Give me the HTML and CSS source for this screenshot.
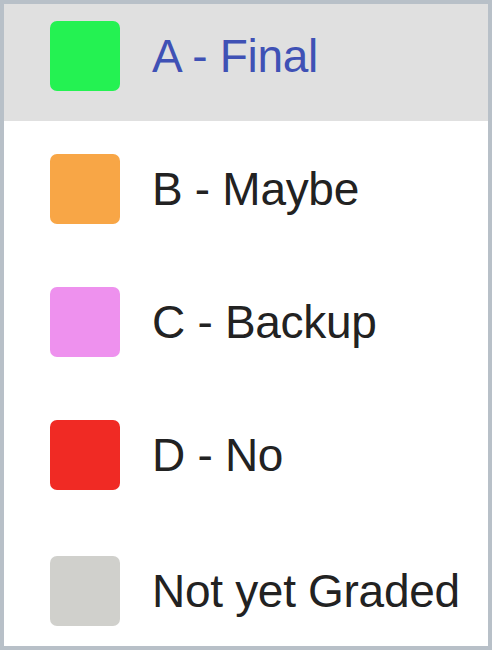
FILE: index.html
```html
<!DOCTYPE html>
<html lang="en">
<head>
  <meta charset="UTF-8">
  <title>Grades</title>
  <link rel="stylesheet" href="styles.css">
</head>
<body>

  <ul class="grade-menu">
    <li class="grade active">
      <span class="swatch green"></span>
      <span class="label">A - Final</span>
    </li>
    <li class="grade">
      <span class="swatch orange"></span>
      <span class="label">B - Maybe</span>
    </li>
    <li class="grade">
      <span class="swatch pink"></span>
      <span class="label">C - Backup</span>
    </li>
    <li class="grade">
      <span class="swatch red"></span>
      <span class="label">D - No</span>
    </li>
    <li class="grade">
      <span class="swatch grey"></span>
      <span class="label">Not yet Graded</span>
    </li>
  </ul>

</body>
</html>
```

FILE: styles.css
```css
html, body {
  margin: 0;
  height: 100%;
}
body {
  font-family: "Liberation Sans", Arial, sans-serif;
  background: #fff;
}
.grade-menu {
  list-style: none;
  margin: 0;
  padding: 0;
  height: 650px;
  box-sizing: border-box;
  border: 4px solid #b8c0c8;
  overflow: hidden;
  display: flex;
  flex-direction: column;
  gap: 16px;
}
.grade {
  flex: 0 0 auto;
  display: flex;
  align-items: flex-start;
  height: 117px;
  padding: 17px 0 0 46px;
  box-sizing: border-box;
  gap: 32px;
}
.grade:last-child {
  margin-top: 3px;
}
.grade.active {
  background: #e0e0e0;
}
.swatch {
  flex: 0 0 auto;
  width: 70px;
  height: 70px;
  border-radius: 7px;
}
.label {
  font-size: 46px;
  letter-spacing: -0.3px;
  line-height: 70px;
  color: #222;
}
.active .label {
  color: #3f51b5;
}
.green { background: #24f252; }
.orange { background: #f8a646; }
.pink { background: #ee91ee; }
.red { background: #f02a24; }
.grey { background: #d0d0cc; }
```
